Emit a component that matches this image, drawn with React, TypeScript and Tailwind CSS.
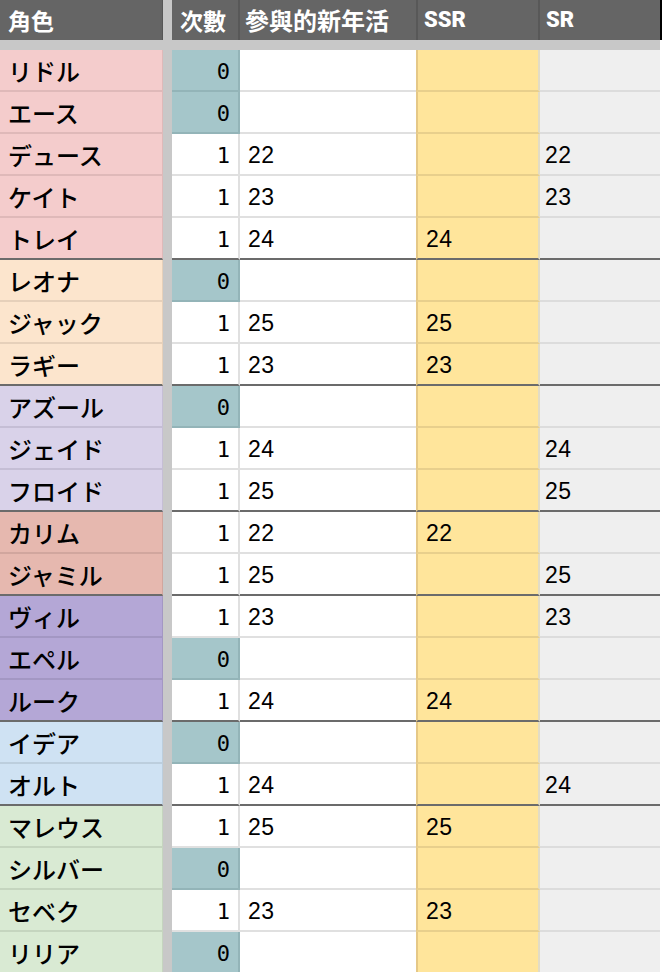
import React from "react";

type G = { bg: string; bd: string };

const groups: Record<string, G> = {
  heart: { bg: "bg-[#f4cccc]", bd: "border-[#dfb9b9]" },
  savana: { bg: "bg-[#fce5cd]", bd: "border-[#e6d0ba]" },
  octa: { bg: "bg-[#d9d2e9]", bd: "border-[#c5bed5]" },
  scara: { bg: "bg-[#e6b8af]", bd: "border-[#d1a69e]" },
  pome: { bg: "bg-[#b4a7d6]", bd: "border-[#a397c3]" },
  igni: { bg: "bg-[#cfe2f3]", bd: "border-[#bccedd]" },
  dia: { bg: "bg-[#d9ead3]", bd: "border-[#c5d5bf]" },
};

type R = {
  name: string;
  g: string;
  count: number;
  ev?: string;
  ssr?: string;
  sr?: string;
  last?: boolean;
};

const rows: R[] = [
  { name: "リドル", g: "heart", count: 0 },
  { name: "エース", g: "heart", count: 0 },
  { name: "デュース", g: "heart", count: 1, ev: "22", sr: "22" },
  { name: "ケイト", g: "heart", count: 1, ev: "23", sr: "23" },
  { name: "トレイ", g: "heart", count: 1, ev: "24", ssr: "24", last: true },
  { name: "レオナ", g: "savana", count: 0 },
  { name: "ジャック", g: "savana", count: 1, ev: "25", ssr: "25" },
  { name: "ラギー", g: "savana", count: 1, ev: "23", ssr: "23", last: true },
  { name: "アズール", g: "octa", count: 0 },
  { name: "ジェイド", g: "octa", count: 1, ev: "24", sr: "24" },
  { name: "フロイド", g: "octa", count: 1, ev: "25", sr: "25", last: true },
  { name: "カリム", g: "scara", count: 1, ev: "22", ssr: "22" },
  { name: "ジャミル", g: "scara", count: 1, ev: "25", sr: "25", last: true },
  { name: "ヴィル", g: "pome", count: 1, ev: "23", sr: "23" },
  { name: "エペル", g: "pome", count: 0 },
  { name: "ルーク", g: "pome", count: 1, ev: "24", ssr: "24", last: true },
  { name: "イデア", g: "igni", count: 0 },
  { name: "オルト", g: "igni", count: 1, ev: "24", sr: "24", last: true },
  { name: "マレウス", g: "dia", count: 1, ev: "25", ssr: "25" },
  { name: "シルバー", g: "dia", count: 0 },
  { name: "セベク", g: "dia", count: 1, ev: "23", ssr: "23" },
  { name: "リリア", g: "dia", count: 0 },
];

const jp = { fontFamily: '"Noto Sans CJK JP", "Noto Sans", sans-serif' };
const mono = { fontFamily: '"DejaVu Sans Mono", "Liberation Mono", monospace' };
const num = { fontFamily: '"Liberation Sans", Arial, sans-serif' };
const head = { fontFamily: 'Roboto, "Noto Sans CJK JP", sans-serif' };

function Row({ r }: { r: R }) {
  const g = groups[r.g];
  const sep = r.last;
  const zero = r.count === 0;
  return (
    <div className="flex h-[42px] shrink-0">
      <div
        className={`w-[163px] flex items-center pl-2 pt-[1px] border-b-2 border-r ${g.bg} ${g.bd} ${sep ? "!border-b-[#6b6b6b]" : ""}`}
      >
        <span className="text-[24px] font-medium text-black leading-none" style={jp}>
          {r.name}
        </span>
      </div>
      <div className="w-[9px] bg-[#c8c8c8]" />
      <div
        className={`w-[68px] flex items-center justify-end pr-2 pt-[4px] border-b-2 border-r-2 ${zero ? "bg-[#a5c6ca] border-[#93b4b8]" : "bg-white border-[#e0e0e0]"} ${sep ? "!border-b-[#6b6b6b]" : ""}`}
      >
        <span className="text-[22px] text-black leading-none slashed-zero" style={mono}>
          {r.count}
        </span>
      </div>
      <div
        className={`w-[176px] flex items-center pl-2 pt-[3px] bg-white border-b-2 border-[#e0e0e0] ${sep ? "!border-b-[#6b6b6b]" : ""}`}
      >
        <span className="text-[23px] tracking-[0.5px] text-black leading-none" style={num}>
          {r.ev}
        </span>
      </div>
      <div
        className={`w-[124px] flex items-center pl-2 pt-[3px] bg-[#ffe59b] border-b-2 border-l-2 border-r-2 border-l-[#e5c887] border-r-[#e2dcc6] border-b-[#e8cf8c] ${sep ? "!border-b-[#6b6b6b]" : ""}`}
      >
        <span className="text-[23px] tracking-[0.5px] text-black leading-none" style={num}>
          {r.ssr}
        </span>
      </div>
      <div
        className={`w-[120px] flex items-center pl-[5px] pt-[3px] bg-[#efefef] border-b-2 border-[#dcdcdc] ${sep ? "!border-b-[#6b6b6b]" : ""}`}
      >
        <span className="text-[23px] tracking-[0.5px] text-black leading-none" style={num}>
          {r.sr}
        </span>
      </div>
      <div className="w-[2px] bg-white" />
    </div>
  );
}

export default function App() {
  return (
    <div className="w-[662px] h-[972px] overflow-hidden bg-white flex flex-col">
      <div className="flex h-[40px] shrink-0 bg-[#656565] text-white font-bold" style={head}>
        <div className="w-[163px] flex items-center pl-2 border-r border-[#585858]">
          <span className="text-[23px] leading-none" style={jp}>角色</span>
        </div>
        <div className="w-[9px] bg-[#c8c8c8]" />
        <div className="w-[68px] flex items-center pl-2 border-r-2 border-[#585858]">
          <span className="text-[23px] leading-none" style={jp}>次數</span>
        </div>
        <div className="w-[178px] flex items-center pl-[5px] border-r-2 border-[#585858]">
          <span className="text-[24px] leading-none" style={jp}>參與的新年活</span>
        </div>
        <div className="w-[122px] flex items-center pl-[6px] border-r-2 border-[#585858]">
          <span className="text-[22px] font-black leading-none">SSR</span>
        </div>
        <div className="w-[120px] flex items-center pl-[6px]">
          <span className="text-[22px] font-black leading-none">SR</span>
        </div>
        <div className="w-[2px] bg-black" />
      </div>
      <div className="h-[10px] shrink-0 bg-[#c8c8c8] flex">
        <div className="w-[660px]" />
        <div className="w-[2px] bg-white" />
      </div>
      {rows.map((r) => (
        <Row key={r.name} r={r} />
      ))}
    </div>
  );
}
